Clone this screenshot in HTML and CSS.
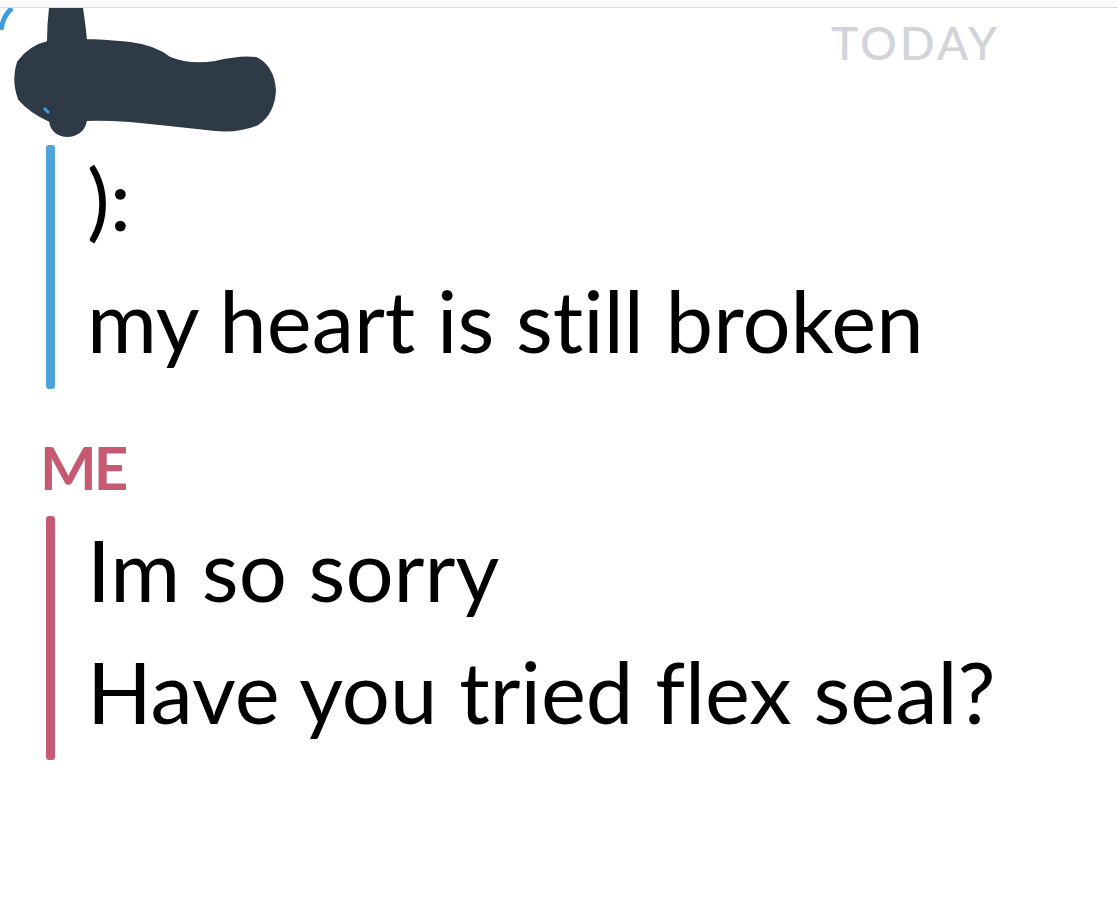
FILE: index.html
```html
<!DOCTYPE html>
<html lang="en">
<head>
    <meta charset="UTF-8">
    <meta name="viewport" content="width=device-width, initial-scale=1.0">
    <title>Chat</title>
    <link rel="stylesheet" href="styles.css">
</head>
<body>

    <div class="topline"></div>

    <div class="header">
        <!-- scribbled-out name -->
        <svg class="redacted" width="280" height="137" viewBox="0 8 280 137">
            <path d="M1 30 Q3 16 12 8" fill="none" stroke="#3d9be0" stroke-width="5"/>
            <path d="M50 8 L82 8 Q85 28 86 40 Q100 40 130 43 Q155 46 170 58 Q190 66 215 62 Q240 56 256 58 Q273 66 275 90 Q274 113 258 124 Q240 132 215 130 Q170 125 130 121 Q100 119 86 120 Q84 134 68 136 Q52 135 50 121 Q30 112 19 99 Q12 80 18 62 Q30 46 48 42 Q48 25 50 8 Z"
                  fill="#2e3a46" stroke="#2e3a46" stroke-width="2" stroke-linejoin="round"/>
            <path d="M44 108 L49 113" stroke="#3d9be0" stroke-width="3"/>
        </svg>
        <div class="today">TODAY</div>
    </div>

    <div class="msg msg-them">
        <div class="bar"></div>
        <div class="lines">
            <div class="line">):</div>
            <div class="line">my heart is still broken</div>
        </div>
    </div>

    <div class="sender">ME</div>

    <div class="msg msg-me">
        <div class="bar"></div>
        <div class="lines">
            <div class="line">Im so sorry</div>
            <div class="line">Have you tried flex seal?</div>
        </div>
    </div>

</body>
</html>
```

FILE: styles.css
```css
body {
    margin: 0;
    background: #fff;
    font-family: 'Lato', 'Noto Sans', sans-serif;
    font-variant-ligatures: none;
    color: #000;
}

.topline {
    height: 7px;
    background: #fbfbfb;
    border-bottom: 1px solid #dcdcdc;
}

.header {
    display: flex;
    justify-content: space-between;
    height: 137px;
}

.redacted {
    display: block;
}

.today {
    margin-right: 118px;
    padding-top: 12px;
    font-size: 46px;
    line-height: 46px;
    font-weight: 500;
    letter-spacing: 3px;
    color: #d3d3da;
}

/* message groups */
.msg {
    display: flex;
}

.bar {
    width: 9px;
    margin-left: 46px;
    border-radius: 3px;
}

.msg-them .bar { background: #4fa3d9; }
.msg-me .bar { background: #c55a72; }

.lines {
    margin-left: 32px;
    margin-top: -8px;
    margin-bottom: 8px;
}

.line {
    font-size: 85px;
    line-height: 122px;
    white-space: nowrap;
}

.sender {
    margin: 48px 0 19px 40px;
    font-size: 60px;
    line-height: 60px;
    font-weight: 700;
    letter-spacing: -3px;
    color: #c55a72;
}
```
